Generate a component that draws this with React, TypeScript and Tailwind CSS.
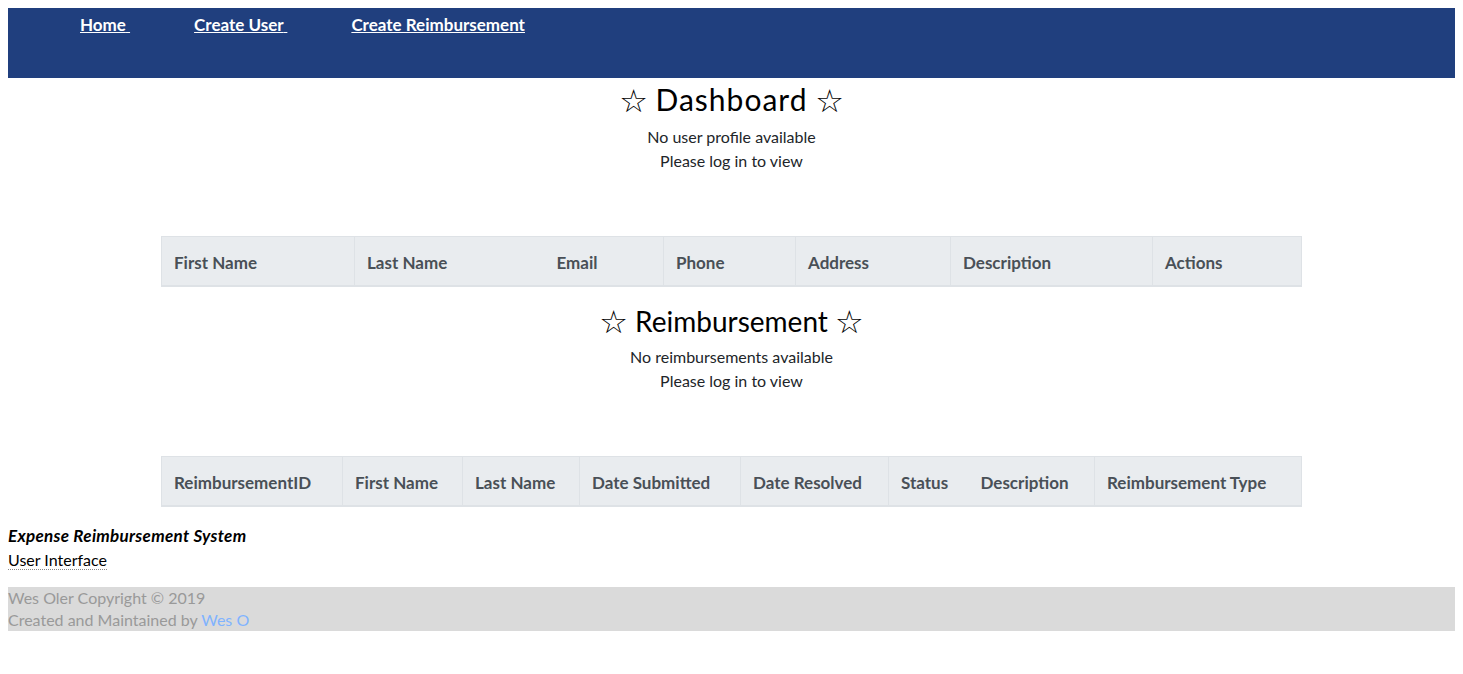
import React from "react";

const font = { fontFamily: 'Lato, "Open Sans", sans-serif' };
const starFont = { fontFamily: '"DejaVu Sans", sans-serif' };

function Star() {
  return (
    <span style={starFont} className="text-[32px] leading-none align-[-1px]">
      ☆
    </span>
  );
}

function HeaderTable({ cols }: { cols: { label: string; w: number; border: boolean }[] }) {
  return (
    <table className="table-fixed border-collapse w-[1140px] mx-auto">
      <thead>
        <tr className="bg-[#e9ecef]">
          {cols.map((c, i) => (
            <th
              key={i}
              style={{ width: c.w }}
              className={
                "text-left font-bold text-[17px] leading-[24px] text-[#495057] px-[12px] pt-[14px] pb-[10px] border-t border-t-[#dee2e6] border-b-2 border-b-[#dee2e6] whitespace-nowrap " +
                (c.border ? "border-l border-l-[#dee2e6]" : "") +
                (i === cols.length - 1 ? " border-r border-r-[#dee2e6]" : "")
              }
            >
              {c.label}
            </th>
          ))}
        </tr>
      </thead>
    </table>
  );
}

const userCols = [
  { label: "First Name", w: 193, border: true },
  { label: "Last Name", w: 190, border: true },
  { label: "Email", w: 119, border: false },
  { label: "Phone", w: 132, border: true },
  { label: "Address", w: 155, border: true },
  { label: "Description", w: 202, border: true },
  { label: "Actions", w: 149, border: true },
];

const reimbCols = [
  { label: "ReimbursementID", w: 181, border: true },
  { label: "First Name", w: 120, border: true },
  { label: "Last Name", w: 117, border: true },
  { label: "Date Submitted", w: 161, border: true },
  { label: "Date Resolved", w: 148, border: true },
  { label: "Status", w: 80, border: true },
  { label: "Description", w: 126, border: false },
  { label: "Reimbursement Type", w: 207, border: true },
];

export default function App() {
  return (
    <div className="p-2 text-[#212529] text-[16px] leading-[24px] bg-white min-h-[674px]" style={font}>
      <nav className="h-[70px] bg-[#203f7e] pt-[5px] pl-[72px] flex gap-[64px] text-[17px]">
        <a href="#" className="text-white font-bold underline">Home{"\u00a0"}</a>
        <a href="#" className="text-white font-bold underline">Create User{"\u00a0"}</a>
        <a href="#" className="text-white font-bold underline">Create Reimbursement</a>
      </nav>

      <section className="text-center">
        <h3 className="text-[30px] leading-[38px] mt-[2px] text-black">
          <Star /> <span className="tracking-[1px]">Dashboard</span> <Star />
        </h3>
        <div className="mt-[7px]">No user profile available</div>
        <div>Please log in to view</div>
      </section>
      <div className="mt-[63px]">
        <HeaderTable cols={userCols} />
      </div>

      <section className="text-center mt-[15px]">
        <h3 className="text-[28px] leading-[38px] text-black">
          <Star /> Reimbursement <Star />
        </h3>
        <div className="mt-[5px]">No reimbursements available</div>
        <div>Please log in to view</div>
      </section>
      <div className="mt-[63px]">
        <HeaderTable cols={reimbCols} />
      </div>

      <footer className="mt-[17px]">
        <div className="font-bold italic text-black text-[17px] tracking-[0.3px]">Expense Reimbursement System</div>
        <div>
          <abbr className="no-underline border-b border-dotted border-[#888] text-black">User Interface</abbr>
        </div>
        <div className="mt-[15px] bg-[#dadada] text-[#999] leading-[22px]">
          <div>Wes Oler Copyright © 2019</div>
          <div>
            Created and Maintained by <a href="#" className="text-[#80b3ff]">Wes O</a>
          </div>
        </div>
      </footer>
    </div>
  );
}
